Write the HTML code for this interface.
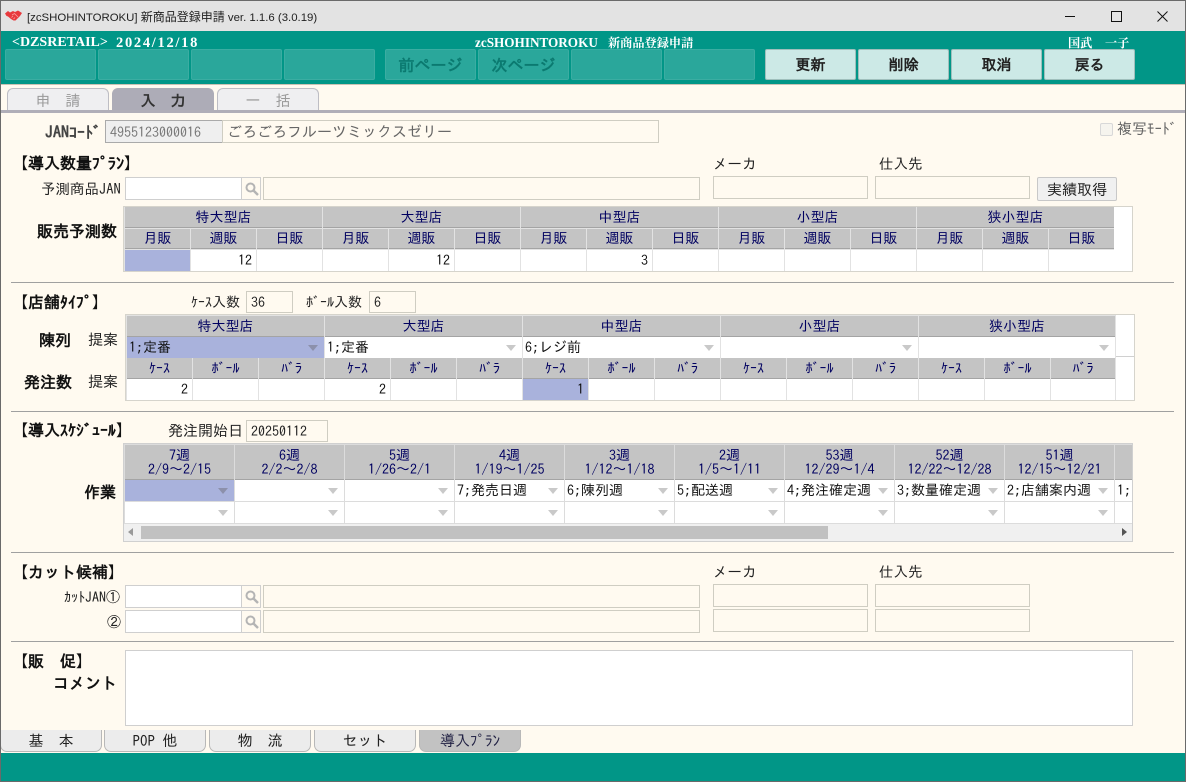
<!DOCTYPE html>
<html lang="ja"><head><meta charset="utf-8"><title>zcSHOHINTOROKU</title>
<style>
html,body{margin:0;padding:0;background:#fffaf0}
body{width:1186px;height:782px;position:relative;overflow:hidden;font:14px "IPAGothic","Noto Sans CJK JP",monospace;color:#222}
div{position:absolute;box-sizing:border-box}
.t{white-space:pre;line-height:16px;height:16px}
.b{font-weight:bold;color:#111;font-size:16px}
.g{background:#2aa79b;border:1px solid #3bada2;border-radius:2px;height:31px;top:49px;width:91px;color:#0b7a70;font-weight:bold;text-align:center;line-height:30px;font-size:16px}
.w{background:#cce9e6;border:1px solid #9fbfbc;border-radius:2px;height:31px;top:49px;width:91px;color:#222;font-weight:bold;text-align:center;line-height:30px;font-size:15px}
.tab{top:88px;height:22px;width:102px;background:#efeff1;border:1px solid #bdbdc4;border-bottom:0;border-radius:6px 6px 0 0;text-align:center;line-height:23px;color:#999;font-size:15px}
.hl{left:11px;width:1163px;height:1px;background:#a0a0a0}
.in{height:23px;background:#fffaf0;border:1px solid #cfcdc2}
.wh{background:#fff;border:1px solid #cfcfcf}
.s{height:23px;width:20px;background:#fffaf0;border:1px solid #cfcfcf}
.s svg{position:absolute;left:2px;top:3px}
.f{position:absolute;display:flex;gap:1px}
.f>p{margin:0;flex:none;box-sizing:border-box;position:relative;overflow:hidden;white-space:pre}
.h{background:#c4c4c4;color:#000060;text-align:center;border-bottom:1px solid #a4a4a4;height:21px;line-height:21px}
.h2{height:35px;line-height:14px;padding-top:3px}
.d{background:#fff;height:21px;line-height:21px;padding:0 4px 0 2px;color:#111}
.r{text-align:right}
.sel{background:#a9b2dc}
.v:after{content:"";position:absolute;right:6px;top:8px;border:5px solid transparent;border-top:6px solid #c9c9c9;border-bottom:0}
.sel.v:after{border-top-color:#8c90ab}
.bt{top:730px;height:22px;width:102px;background:#ececec;border:1px solid #b8b8b8;border-top:0;border-radius:0 0 7px 7px;text-align:center;line-height:22px;color:#222;font-size:15px}
</style></head><body>

<div style="left:0;top:0;width:1186px;height:31px;background:#e3e3e3;border-top:1px solid #6a6a6a"></div>
<svg style="position:absolute;left:5px;top:10px" width="17" height="11" viewBox="0 0 17 11"><path d="M0 3.5L3 1L5 2.5L8 1L10 2L13 .5L17 3L15 6L10.5 10.5L8.5 10.5L6 9L3 6.5L1.5 6Z" fill="#e8393d"/><path d="M7 5L9.5 3.5L13 7M6.5 7.5L8 6M8.5 9L10 7.5" stroke="#f7a0a0" stroke-width=".8" fill="none"/></svg>
<div class="t" style="left:27px;top:9px;font:11.4px/16px 'Liberation Sans','Noto Sans CJK JP',sans-serif;color:#222">[zcSHOHINTOROKU] <span style="font-size:12px">新商品登録申請</span> ver. 1.1.6 (3.0.19)</div>
<div style="left:1065px;top:16px;width:10px;height:1px;background:#111"></div>
<div style="left:1111px;top:11px;width:11px;height:11px;border:1px solid #111"></div>
<svg style="position:absolute;left:1157px;top:11px" width="11" height="11" viewBox="0 0 11 11"><path d="M.5 .5L10.5 10.5M10.5 .5L.5 10.5" stroke="#111" fill="none"/></svg>

<div style="left:0;top:31px;width:1186px;height:53px;background:#019687"></div>
<div class="t" style="left:12px;top:35px;font:bold 14px/16px 'Liberation Serif','Noto Serif CJK SC',serif;color:#fff">&lt;DZSRETAIL&gt;</div>
<div class="t" style="left:116px;top:35px;font:bold 14.5px/16px 'Liberation Serif',serif;color:#fff;letter-spacing:1.7px">2024/12/18</div>
<div class="t" style="left:475px;top:35px;font:bold 13.2px/16px 'Liberation Serif','Noto Serif CJK JP','Noto Serif CJK SC',serif;color:#fff">zcSHOHINTOROKU</div>
<div class="t" style="left:608px;top:35px;font:bold 12.2px/16px 'Noto Serif CJK JP','Noto Serif CJK SC',serif;color:#fff">新商品登録申請</div>
<div class="t" style="left:1068px;top:35px;font:bold 12.2px/16px 'Noto Serif CJK JP','Noto Serif CJK SC',serif;color:#fff">国武</div>
<div class="t" style="left:1105px;top:35px;font:bold 12.2px/16px 'Noto Serif CJK JP','Noto Serif CJK SC',serif;color:#fff">一子</div>

<div class="g" style="left:5px"></div><div class="g" style="left:98px"></div><div class="g" style="left:191px"></div><div class="g" style="left:284px"></div>
<div class="g" style="left:385px">前ページ</div><div class="g" style="left:478px">次ページ</div><div class="g" style="left:571px"></div><div class="g" style="left:664px"></div>
<div class="w" style="left:765px">更新</div><div class="w" style="left:858px">削除</div><div class="w" style="left:951px">取消</div><div class="w" style="left:1044px">戻る</div>

<div class="tab" style="left:7px">申　請</div>
<div class="tab" style="left:112px;background:#adacb7;border-color:#adacb7;color:#333;font-weight:bold">入　力</div>
<div class="tab" style="left:217px">一　括</div>
<div style="left:0;top:84px;width:1186px;height:1px;background:#c9c2b4"></div>
<div style="left:0;top:110px;width:1186px;height:3px;background:#b0aeb8"></div>

<div class="t b" style="left:45px;top:124px;color:#444">JANｺｰﾄﾞ</div>
<div class="in" style="left:105px;top:120px;width:118px;background:#efefef;border-color:#aaa;color:#777;line-height:22px;padding-left:4px">4955123000016</div>
<div class="in" style="left:222px;top:120px;width:437px;color:#666;line-height:22px;padding-left:4px;font-size:15px">ごろごろフルーツミックスゼリー</div>
<div style="left:1100px;top:123px;width:13px;height:13px;background:#f6f4ee;border:1px solid #d8d8d8;border-radius:2px"></div>
<div class="t" style="left:1117px;top:121px;color:#666;font-size:15px">複写ﾓｰﾄﾞ</div>

<!-- section 1 -->
<div class="t b" style="left:12px;top:155px">【導入数量ﾌﾟﾗﾝ】</div>
<div class="t" style="left:713px;top:156px;font-size:14.5px">メーカ</div>
<div class="t" style="left:879px;top:156px;font-size:14.5px">仕入先</div>
<div class="t" style="left:41px;top:181px;font-size:14.5px">予測商品JAN</div>
<div class="in wh" style="left:125px;top:177px;width:117px"></div>
<div class="s" style="left:241px;top:177px"><svg width="16" height="16" viewBox="0 0 16 16"><circle cx="6.5" cy="6.5" r="4" fill="none" stroke="#b4b4b4" stroke-width="2"/><path d="M9.5 9.5L14 14" stroke="#b4b4b4" stroke-width="2.4"/></svg></div>
<div class="in" style="left:263px;top:177px;width:437px"></div>
<div class="in" style="left:713px;top:176px;width:155px"></div>
<div class="in" style="left:875px;top:176px;width:155px"></div>
<div style="left:1037px;top:177px;width:80px;height:24px;background:#f0f0f0;border:1px solid #c8c8c8;border-radius:2px;text-align:center;line-height:23px;color:#222;font-size:15px">実績取得</div>
<div class="t b" style="left:37px;top:223px">販売予測数</div>

<div style="left:123px;top:206px;width:1010px;height:66px;background:#fff;border:1px solid #d6d4cc"></div>
<div style="left:124px;top:207px;width:990px;height:64px;background:#e2e2e2"></div>
<div class="f" style="left:125px;top:207px"><p class="h" style="width:197px">特大型店</p><p class="h" style="width:197px">大型店</p><p class="h" style="width:197px">中型店</p><p class="h" style="width:197px">小型店</p><p class="h" style="width:197px">狭小型店</p></div>
<div class="f" style="left:125px;top:229px"><p class="h" style="width:65px;height:20px;line-height:19px">月販</p><p class="h" style="width:65px;height:20px;line-height:19px">週販</p><p class="h" style="width:65px;height:20px;line-height:19px">日販</p><p class="h" style="width:65px;height:20px;line-height:19px">月販</p><p class="h" style="width:65px;height:20px;line-height:19px">週販</p><p class="h" style="width:65px;height:20px;line-height:19px">日販</p><p class="h" style="width:65px;height:20px;line-height:19px">月販</p><p class="h" style="width:65px;height:20px;line-height:19px">週販</p><p class="h" style="width:65px;height:20px;line-height:19px">日販</p><p class="h" style="width:65px;height:20px;line-height:19px">月販</p><p class="h" style="width:65px;height:20px;line-height:19px">週販</p><p class="h" style="width:65px;height:20px;line-height:19px">日販</p><p class="h" style="width:65px;height:20px;line-height:19px">月販</p><p class="h" style="width:65px;height:20px;line-height:19px">週販</p><p class="h" style="width:65px;height:20px;line-height:19px">日販</p></div>
<div class="f" style="left:125px;top:250px"><p class="d sel" style="width:65px"></p><p class="d r" style="width:65px">12</p><p class="d" style="width:65px"></p><p class="d" style="width:65px"></p><p class="d r" style="width:65px">12</p><p class="d" style="width:65px"></p><p class="d" style="width:65px"></p><p class="d r" style="width:65px">3</p><p class="d" style="width:65px"></p><p class="d" style="width:65px"></p><p class="d" style="width:65px"></p><p class="d" style="width:65px"></p><p class="d" style="width:65px"></p><p class="d" style="width:65px"></p><p class="d" style="width:65px"></p></div>
<div class="hl" style="top:282px"></div>

<!-- section 2 -->
<div class="t b" style="left:12px;top:294px">【店舗ﾀｲﾌﾟ】</div>
<div class="t" style="left:191px;top:294px">ｹｰｽ入数</div>
<div class="in" style="left:246px;top:291px;width:47px;height:22px;line-height:20px;padding-left:4px">36</div>
<div class="t" style="left:306px;top:294px">ﾎﾞｰﾙ入数</div>
<div class="in" style="left:369px;top:291px;width:47px;height:22px;line-height:20px;padding-left:4px">6</div>
<div class="t b" style="left:39px;top:332px">陳列</div>
<div class="t" style="left:88px;top:332px;font-size:15px">提案</div>
<div class="t b" style="left:24px;top:374px">発注数</div>
<div class="t" style="left:88px;top:374px;font-size:15px">提案</div>

<div style="left:125px;top:314px;width:1010px;height:87px;background:#fff;border:1px solid #d6d4cc"></div>
<div style="left:1116px;top:356px;width:18px;height:1px;background:#d0d0d0"></div>
<div style="left:126px;top:315px;width:990px;height:85px;background:#e2e2e2"></div>
<div class="f" style="left:127px;top:316px"><p class="h" style="width:197px">特大型店</p><p class="h" style="width:197px">大型店</p><p class="h" style="width:197px">中型店</p><p class="h" style="width:197px">小型店</p><p class="h" style="width:196px">狭小型店</p></div>
<div class="f" style="left:127px;top:337px;gap:1px"><p class="d sel v" style="width:197px">1;定番</p><p class="d v" style="width:197px">1;定番</p><p class="d v" style="width:197px">6;レジ前</p><p class="d v" style="width:197px"></p><p class="d v" style="width:196px"></p></div>
<div class="f" style="left:127px;top:358px"><p class="h" style="width:65px">ｹｰｽ</p><p class="h" style="width:65px">ﾎﾞｰﾙ</p><p class="h" style="width:65px">ﾊﾞﾗ</p><p class="h" style="width:65px">ｹｰｽ</p><p class="h" style="width:65px">ﾎﾞｰﾙ</p><p class="h" style="width:65px">ﾊﾞﾗ</p><p class="h" style="width:65px">ｹｰｽ</p><p class="h" style="width:65px">ﾎﾞｰﾙ</p><p class="h" style="width:65px">ﾊﾞﾗ</p><p class="h" style="width:65px">ｹｰｽ</p><p class="h" style="width:65px">ﾎﾞｰﾙ</p><p class="h" style="width:65px">ﾊﾞﾗ</p><p class="h" style="width:65px">ｹｰｽ</p><p class="h" style="width:65px">ﾎﾞｰﾙ</p><p class="h" style="width:64px">ﾊﾞﾗ</p></div>
<div class="f" style="left:127px;top:379px"><p class="d r" style="width:65px">2</p><p class="d" style="width:65px"></p><p class="d" style="width:65px"></p><p class="d r" style="width:65px">2</p><p class="d" style="width:65px"></p><p class="d" style="width:65px"></p><p class="d r sel" style="width:65px">1</p><p class="d" style="width:65px"></p><p class="d" style="width:65px"></p><p class="d" style="width:65px"></p><p class="d" style="width:65px"></p><p class="d" style="width:65px"></p><p class="d" style="width:65px"></p><p class="d" style="width:65px"></p><p class="d" style="width:64px"></p></div>
<div class="hl" style="top:411px"></div>

<!-- section 3 -->
<div class="t b" style="left:12px;top:422px">【導入ｽｹｼﾞｭｰﾙ】</div>
<div class="t" style="left:168px;top:423px;font-size:15px">発注開始日</div>
<div class="in" style="left:246px;top:420px;width:82px;height:22px;line-height:20px;padding-left:4px">20250112</div>
<div class="t b" style="left:84px;top:484px">作業</div>

<div style="left:123px;top:443px;width:1010px;height:99px;background:#f0f0f0;border:1px solid #d0d0d0"></div>
<div style="left:124px;top:444px;width:1008px;height:80px;background:#dcdcdc"></div>
<div class="f" style="left:125px;top:445px;width:1007px;overflow:hidden"><p class="h h2" style="width:109px">7週
2/9～2/15</p><p class="h h2" style="width:109px">6週
2/2～2/8</p><p class="h h2" style="width:109px">5週
1/26～2/1</p><p class="h h2" style="width:109px">4週
1/19～1/25</p><p class="h h2" style="width:109px">3週
1/12～1/18</p><p class="h h2" style="width:109px">2週
1/5～1/11</p><p class="h h2" style="width:109px">53週
12/29～1/4</p><p class="h h2" style="width:109px">52週
12/22～12/28</p><p class="h h2" style="width:109px">51週
12/15～12/21</p><p class="h h2" style="width:17px"></p></div>
<div class="f" style="left:125px;top:480px;width:1007px;overflow:hidden"><p class="d v sel" style="width:109px"></p><p class="d v" style="width:109px"></p><p class="d v" style="width:109px"></p><p class="d v" style="width:109px">7;発売日週</p><p class="d v" style="width:109px">6;陳列週</p><p class="d v" style="width:109px">5;配送週</p><p class="d v" style="width:109px">4;発注確定週</p><p class="d v" style="width:109px">3;数量確定週</p><p class="d v" style="width:109px">2;店舗案内週</p><p class="d" style="width:17px">1;</p></div>
<div class="f" style="left:125px;top:502px;width:1007px;overflow:hidden"><p class="d v" style="width:109px"></p><p class="d v" style="width:109px"></p><p class="d v" style="width:109px"></p><p class="d v" style="width:109px"></p><p class="d v" style="width:109px"></p><p class="d v" style="width:109px"></p><p class="d v" style="width:109px"></p><p class="d v" style="width:109px"></p><p class="d v" style="width:109px"></p><p class="d" style="width:17px"></p></div>
<div style="left:141px;top:526px;width:687px;height:13px;background:#c1c1c1"></div>
<svg style="position:absolute;left:128px;top:528px" width="6" height="9" viewBox="0 0 6 9"><path d="M5 0V8L0 4Z" fill="#999"/></svg>
<svg style="position:absolute;left:1122px;top:528px" width="6" height="9" viewBox="0 0 6 9"><path d="M0 0V8L5 4Z" fill="#555"/></svg>
<div class="hl" style="top:552px"></div>

<!-- section 4 -->
<div class="t b" style="left:12px;top:564px">【カット候補】</div>
<div class="t" style="left:713px;top:564px;font-size:14.5px">メーカ</div>
<div class="t" style="left:879px;top:564px;font-size:14.5px">仕入先</div>
<div class="t" style="left:64px;top:589px">ｶｯﾄJAN①</div>
<div class="t" style="left:107px;top:614px">②</div>
<div class="in wh" style="left:125px;top:585px;width:117px"></div>
<div class="s" style="left:241px;top:585px"><svg width="16" height="16" viewBox="0 0 16 16"><circle cx="6.5" cy="6.5" r="4" fill="none" stroke="#b4b4b4" stroke-width="2"/><path d="M9.5 9.5L14 14" stroke="#b4b4b4" stroke-width="2.4"/></svg></div>
<div class="in" style="left:263px;top:585px;width:437px"></div>
<div class="in" style="left:713px;top:584px;width:155px"></div>
<div class="in" style="left:875px;top:584px;width:155px"></div>
<div class="in wh" style="left:125px;top:610px;width:117px"></div>
<div class="s" style="left:241px;top:610px"><svg width="16" height="16" viewBox="0 0 16 16"><circle cx="6.5" cy="6.5" r="4" fill="none" stroke="#b4b4b4" stroke-width="2"/><path d="M9.5 9.5L14 14" stroke="#b4b4b4" stroke-width="2.4"/></svg></div>
<div class="in" style="left:263px;top:610px;width:437px"></div>
<div class="in" style="left:713px;top:609px;width:155px"></div>
<div class="in" style="left:875px;top:609px;width:155px"></div>
<div class="hl" style="top:641px"></div>

<!-- section 5 -->
<div class="t b" style="left:12px;top:653px">【販　促】</div>
<div class="t b" style="left:53px;top:675px">コメント</div>
<div class="wh" style="left:125px;top:650px;width:1008px;height:76px"></div>

<div class="bt" style="left:0">基　本</div>
<div class="bt" style="left:104px">POP 他</div>
<div class="bt" style="left:209px">物　流</div>
<div class="bt" style="left:314px">セット</div>
<div class="bt" style="left:419px;background:#c2c2c2;color:#224">導入ﾌﾟﾗﾝ</div>

<div style="left:0;top:753px;width:1186px;height:29px;background:#019687;border-bottom:1px solid #6a6a6a"></div>
<div style="left:0;top:0;width:1px;height:782px;background:#6a6a6a"></div>
<div style="left:1185px;top:0;width:1px;height:782px;background:#6a6a6a"></div>
</body></html>
